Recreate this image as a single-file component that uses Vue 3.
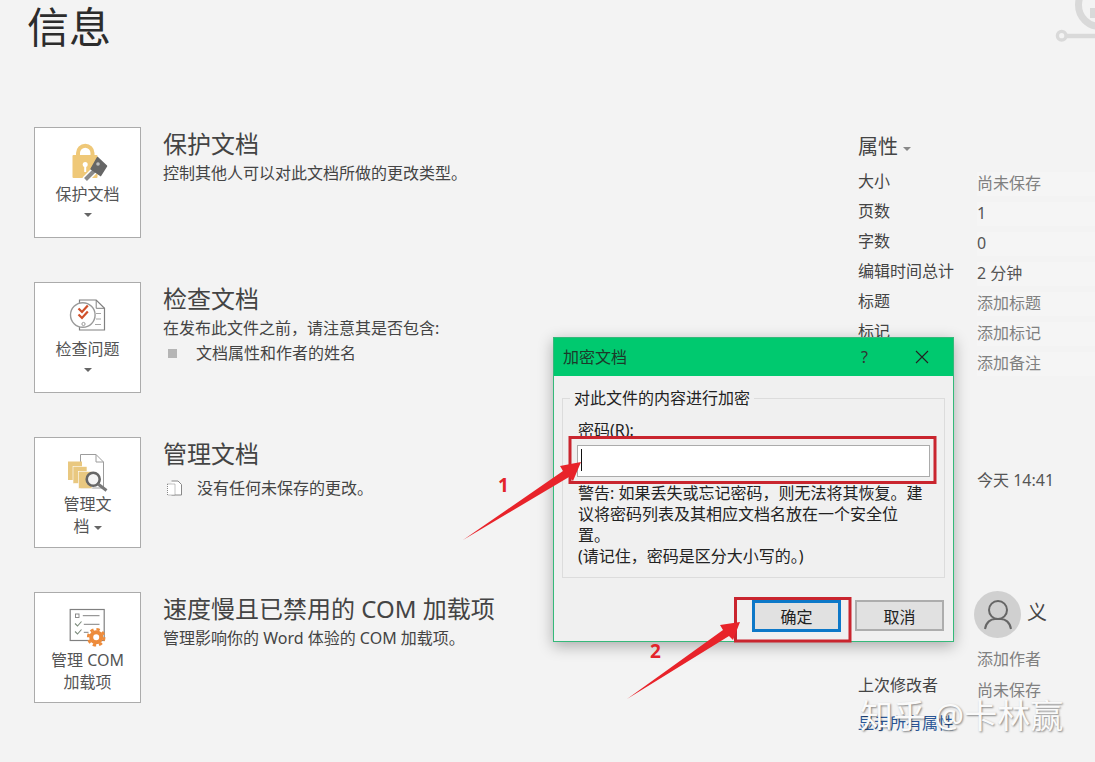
<template>
  <div class="page">
    <svg class="corner-art" width="45" height="50" viewBox="0 0 45 50">
      <circle cx="50" cy="5" r="21.500" fill="none" stroke="#d9d9d9" stroke-width="7" />
      <rect x="40" y="8" width="5" height="10" fill="#d9d9d9" />
      <path d="M15 36 H45" stroke="#d9d9d9" stroke-width="4.500" />
      <circle cx="11.700" cy="35.700" r="4.300" fill="#f3f3f3" stroke="#d9d9d9" stroke-width="3.400" />
    </svg>

    <main class="main">
      <h1 class="page-title">信息</h1>

      <section class="info-row">
        <button class="tile">
          <svg class="tile-icon" width="46" height="40" viewBox="0 0 46 40">
            <path d="M13 15 V11 a7.250 7.250 0 0 1 14.500 0 V15" fill="none" stroke="#efc878" stroke-width="4" />
            <rect x="7.500" y="13" width="25" height="23" rx="1" fill="#efc878" />
            <circle cx="20.200" cy="22.500" r="2.500" fill="#fff" />
            <rect x="19.200" y="23" width="2" height="7" fill="#fff" />
            <path d="M30 28 L20 38" stroke="#fff" stroke-width="7" />
            <path d="M30 28 L20.500 37.500" stroke="#8a8a8a" stroke-width="4" />
            <path d="M32.500 15.500 L41.500 24 L35.500 33.500 L26 27 Z" fill="#666" stroke="#666" stroke-width="1.500" stroke-linejoin="round" />
            <circle cx="33" cy="22" r="1.800" fill="#bdbdbd" />
          </svg>
          <span class="tile-label">保护文档</span>
          <i class="caret tile-caret"></i>
        </button>
        <div class="row-text">
          <h2>保护文档</h2>
          <p>控制其他人可以对此文档所做的更改类型。</p>
        </div>
      </section>

      <section class="info-row">
        <button class="tile">
          <svg class="tile-icon" width="46" height="40" viewBox="0 0 46 40">
            <path d="M14.500 3 H31.200 L39.500 11.300 V33 H14.500 Z" fill="#fff" stroke="#808080" stroke-width="1.200" />
            <path d="M31.200 3 V11.300 H39.500" fill="none" stroke="#808080" />
            <path d="M31 16.500 H36 M31 22 H36 M30 27.500 H36" stroke="#a5a5a5" />
            <circle cx="17.800" cy="18" r="12.300" fill="#fff" stroke="#9a9a9a" stroke-width="1.400" />
            <path d="M13.500 11.500 L17 15 L22.800 8.500 M13.500 17.500 L17 21 L22.800 14.500" fill="none" stroke="#d0502a" stroke-width="2.200" />
            <circle cx="18.500" cy="27" r="1.600" fill="#fff" stroke="#999" />
          </svg>
          <span class="tile-label">检查问题</span>
          <i class="caret tile-caret"></i>
        </button>
        <div class="row-text">
          <h2>检查文档</h2>
          <p>在发布此文件之前，请注意其是否包含:</p>
          <p class="row-item"><i class="bullet"></i>文档属性和作者的姓名</p>
        </div>
      </section>

      <section class="info-row">
        <button class="tile">
          <svg class="tile-icon" width="46" height="40" viewBox="0 0 46 40">
            <path d="M15.500 2.500 H31 L38.500 10 V36 H15.500 Z" fill="#fff" stroke="#9c9c9c" />
            <path d="M31 2.500 V10 H38.500" fill="none" stroke="#9c9c9c" />
            <rect x="3" y="9.500" width="14" height="18.500" fill="#e9c880" />
            <rect x="8" y="14.500" width="14" height="17" fill="#e9c880" stroke="#fff" stroke-width=".6" />
            <rect x="13.500" y="19.500" width="13.500" height="17" fill="#e9c880" stroke="#fff" stroke-width=".6" />
            <circle cx="28.200" cy="27.300" r="6.500" fill="#f4f4f4" stroke="#666" stroke-width="2.600" />
            <path d="M33 32 L41.500 38.500" stroke="#777" stroke-width="3" />
          </svg>
          <span class="tile-label">管理文<br />档 <i class="caret"></i></span>
        </button>
        <div class="row-text">
          <h2>管理文档</h2>
          <p class="row-item row-item-doc">
            <svg class="doc-mini" width="17" height="16" viewBox="0 0 17 16">
              <path d="M5.500 1 H12 L15.500 4.500 V15 H5.500" fill="#fff" stroke="#888" />
              <path d="M1.500 4 H9 V15 H1.500 Z" fill="#fff" stroke="#888" stroke-dasharray="1 1" />
            </svg>
            没有任何未保存的更改。
          </p>
        </div>
      </section>

      <section class="info-row">
        <button class="tile tile-com">
          <svg class="tile-icon" width="46" height="40" viewBox="0 0 46 40">
            <rect x="5.200" y="2.500" width="34" height="31" fill="#fff" stroke="#808080" stroke-width="1.200" />
            <rect x="10.500" y="7" width="3.500" height="3.500" fill="none" stroke="#808080" stroke-width=".9" />
            <path d="M17.800 8.700 H34.500 M18.800 17.300 H34.500 M18.800 25.300 H23.500" stroke="#808080" />
            <path d="M10 16.500 L12.500 19 L16.500 14.500 M10 24.500 L12.500 27 L16.500 22.500" fill="none" stroke="#7d8c7d" stroke-width="1.100" />
            <circle cx="31.200" cy="30.300" r="8" fill="none" stroke="#ed8b3b" stroke-width="2.600" stroke-dasharray="3.400 2.880" />
            <circle cx="31.200" cy="30.300" r="5" fill="#fff" stroke="#ed8b3b" stroke-width="4" />
          </svg>
          <span class="tile-label">管理 COM<br />加载项</span>
        </button>
        <div class="row-text">
          <h2>速度慢且已禁用的 COM 加载项</h2>
          <p>管理影响你的 Word 体验的 COM 加载项。</p>
        </div>
      </section>
    </main>

    <aside class="props">
      <h3 class="props-title">属性 <i class="caret caret-light"></i></h3>
      <div v-for="row in propRows" :key="row.value" class="prop-row">
        <span class="prop-label">{{ row.label }}</span>
        <span class="prop-value" :class="{ muted: row.muted }">{{ row.value }}</span>
      </div>

      <div class="prop-row prop-date">
        <span></span>
        <span class="prop-value plain">今天 14:41</span>
      </div>

      <div class="author">
        <svg class="avatar" width="47" height="47" viewBox="0 0 47 47">
          <circle cx="23.500" cy="23.500" r="23.500" fill="#d0d0d0" />
          <circle cx="24" cy="19" r="9" fill="none" stroke="#666" stroke-width="2" />
          <path d="M11 38 C12 31 17 28 21 28 H27 C31 28 36 31 37 38" fill="none" stroke="#666" stroke-width="2" />
        </svg>
        <span class="author-name">义</span>
      </div>
      <div class="prop-row prop-short">
        <span></span>
        <span class="prop-value plain muted">添加作者</span>
      </div>
      <div class="prop-row prop-last">
        <span class="prop-label">上次修改者</span>
        <span class="prop-value plain muted">尚未保存</span>
      </div>
      <a class="all-props">显示所有属性</a>
    </aside>

    <div class="dialog">
      <div class="dialog-head">
        <span class="dialog-title">加密文档</span>
        <span class="dialog-help">?</span>
        <svg class="dialog-close" width="14" height="14" viewBox="0 0 14 14">
          <path d="M1 1 L13 13 M13 1 L1 13" stroke="#222" stroke-width="1.100" />
        </svg>
      </div>
      <fieldset class="group">
        <legend>对此文件的内容进行加密</legend>
        <label class="pw-label">密码(R):</label>
        <div class="pw-input"><i class="pw-caret"></i></div>
        <p class="pw-note">
          警告: 如果丢失或忘记密码，则无法将其恢复。建<br />
          议将密码列表及其相应文档名放在一个安全位<br />
          置。<br />
          (请记住，密码是区分大小写的。)
        </p>
      </fieldset>
      <div class="dialog-foot">
        <button class="dlg-btn dlg-ok">确定</button>
        <button class="dlg-btn">取消</button>
      </div>
    </div>

    <!-- 标注 -->
    <svg class="marks" width="1095" height="762" viewBox="0 0 1095 762">
      <rect x="570" y="437.500" width="365" height="45" fill="none" stroke="#c9252e" stroke-width="3" />
      <rect x="735.500" y="598.500" width="114.500" height="42.500" fill="none" stroke="#c9252e" stroke-width="3" />
      <polygon points="463,540 563,471 560,466 581,462 573,481 569,477" fill="#e8232a" />
      <polygon points="627,699 723,630 720,625 740,622 733,640 729,636" fill="#e8232a" />
    </svg>
    <span class="mark-num num-one">1</span>
    <span class="mark-num num-two">2</span>

    <div class="watermark">知乎 @卡林赢</div>
  </div>
</template>

<script setup>
const propRows = [
  { label: '大小', value: '尚未保存', muted: true },
  { label: '页数', value: '1' },
  { label: '字数', value: '0' },
  { label: '编辑时间总计', value: '2 分钟' },
  { label: '标题', value: '添加标题', muted: true },
  { label: '标记', value: '添加标记', muted: true },
  { label: '', value: '添加备注', muted: true }
]
</script>

<style scoped>
.page {
  position: relative;
  display: flex;
  width: 1095px;
  height: 762px;
  overflow: hidden;
  background: #f3f3f3;
  color: #444;
  font-family: "Noto Sans", "Noto Sans CJK SC", sans-serif;
  font-size: 16px;
}

.corner-art {
  position: absolute;
  top: 0;
  right: 0;
}

.main {
  flex: 0 0 858px;
  padding-left: 34px;
  box-sizing: border-box;
}

.page-title {
  margin: 0 0 73px -7px;
  height: 54px;
  font-size: 42px;
  font-weight: 400;
  line-height: 54px;
  color: #2c2c2c;
}

.info-row {
  display: flex;
  gap: 22px;
  height: 111px;
  margin-bottom: 44px;
}

.tile {
  display: flex;
  flex-direction: column;
  align-items: center;
  flex: 0 0 107px;
  box-sizing: border-box;
  height: 111px;
  padding: 14px 0 0;
  background: #fff;
  border: 1px solid #ababab;
  font: inherit;
  color: #555;
}

.tile-label {
  margin-top: 1px;
  line-height: 22px;
  text-align: center;
}

.tile-com .tile-label {
  margin-top: 2px;
}

.tile-caret {
  margin-top: 8px;
}

.caret {
  display: inline-block;
  width: 0;
  height: 0;
  border-left: 4px solid transparent;
  border-right: 4px solid transparent;
  border-top: 4px solid #666;
  vertical-align: middle;
}

.caret-light {
  border-top-color: #888;
}

.row-text {
  padding-top: 1px;
}

.row-text h2 {
  margin: 0;
  font-size: 24px;
  font-weight: 400;
  line-height: 32px;
  color: #444;
}

.row-text p {
  margin: 0;
  line-height: 26px;
  color: #444;
  white-space: nowrap;
}

.row-text .row-item {
  display: flex;
  align-items: center;
  line-height: 24px;
}

.bullet {
  width: 9px;
  height: 9px;
  margin: 0 19px 0 5px;
  background: #b5b5b5;
}

.row-text .row-item-doc {
  margin-top: 6px;
}

.doc-mini {
  margin: 0 14px 0 3px;
}

.props {
  flex: 1;
  padding-top: 132px;
}

.props-title {
  margin: 0 0 4px;
  font-size: 20px;
  font-weight: 400;
  line-height: 30px;
  color: #444;
}

.prop-row {
  display: grid;
  grid-template-columns: 119px 1fr;
  height: 30px;
  white-space: nowrap;
}

.prop-label {
  line-height: 30px;
  color: #444;
}

.prop-value {
  height: 24px;
  margin-top: 6px;
  line-height: 23px;
  background: #f5f5f5;
  color: #555;
}

.prop-value.plain {
  background: none;
}

.muted {
  color: #808080;
}

.prop-date {
  margin-top: 87px;
}

.author {
  display: flex;
  align-items: center;
  gap: 6px;
  margin: 98px 0 0 116px;
}

.author-name {
  font-size: 20px;
  line-height: 44px;
  margin-bottom: 3px;
  color: #444;
}

.prop-short {
  height: 28px;
  margin-top: 4px;
}

.prop-last .prop-value {
  margin-top: 9px;
}

.all-props {
  display: block;
  margin-top: 11px;
  line-height: 24px;
  color: #2b5797;
}

.dialog {
  position: absolute;
  left: 553px;
  top: 337px;
  box-sizing: border-box;
  width: 401px;
  height: 305px;
  background: #f0f0f0;
  border: 1px solid #35b97a;
  box-shadow: 0 4px 14px rgba(0, 0, 0, 0.3);
  color: #222;
}

.dialog-head {
  display: flex;
  align-items: center;
  height: 38px;
  padding-left: 9px;
  background: #00c96f;
}

.dialog-title {
  flex: 1;
  margin-top: -2px;
  color: #1c3a2a;
}

.dialog-help {
  margin-right: 47px;
  font-size: 16px;
  color: #333;
}

.dialog-close {
  margin-right: 24px;
}

.group {
  box-sizing: border-box;
  height: 191px;
  margin: 11px 8px 0;
  padding: 0 14px 0 15px;
  border: 1px solid #dcdcdc;
  min-width: 0;
}

.group legend {
  margin-left: -8px;
  padding: 0 4px;
  line-height: 22px;
}

.pw-label {
  display: block;
  margin-top: 11px;
  line-height: 21px;
}

.pw-input {
  box-sizing: border-box;
  height: 32px;
  margin: 4px 0 6px -1px;
  padding: 3px;
  background: #fff;
  border: 1px solid #ababab;
}

.pw-caret {
  display: block;
  width: 1px;
  height: 22px;
  background: #111;
}

.pw-note {
  margin: 0;
  line-height: 21px;
  white-space: nowrap;
}

.dialog-foot {
  display: flex;
  justify-content: flex-end;
  gap: 14px;
  margin-top: 22px;
  padding-right: 9px;
}

.dlg-btn {
  box-sizing: border-box;
  width: 89px;
  height: 31px;
  padding: 0;
  background: #e1e1e1;
  border: 2px solid #adadad;
  font: inherit;
  color: #222;
}

.dlg-ok {
  height: 32px;
  border: 3px solid #0d78c8;
}

.marks {
  position: absolute;
  left: 0;
  top: 0;
  pointer-events: none;
}

.mark-num {
  position: absolute;
  font-size: 19px;
  font-weight: 700;
  line-height: 20px;
  color: #e3242b;
}

.num-one {
  left: 498px;
  top: 475px;
}

.num-two {
  left: 650px;
  top: 641px;
}

.watermark {
  position: absolute;
  left: 860px;
  top: 694px;
  font-size: 33px;
  line-height: 44px;
  white-space: nowrap;
  color: #fafafa;
  text-shadow: 1px 1px 2px rgba(0, 0, 0, 0.45);
}
</style>
